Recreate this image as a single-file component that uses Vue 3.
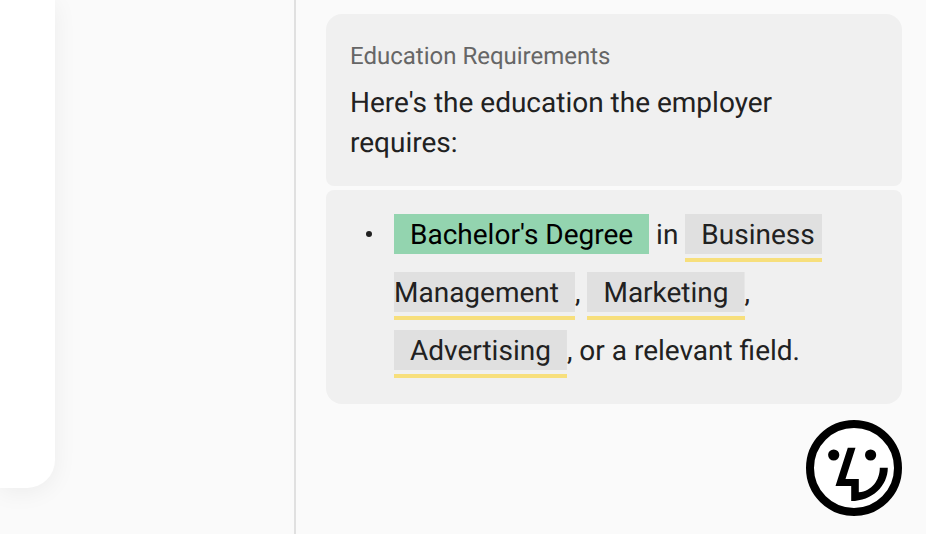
<script setup>
const intro = "Here's the education the employer requires:";
</script>

<template>
  <div class="page">
    <aside class="side">
      <div class="sheet"></div>
    </aside>
    <main class="content">
      <section class="card head">
        <h2 class="title">Education Requirements</h2>
        <p class="intro">{{ intro }}</p>
      </section>
      <section class="card body">
        <div class="row">
          <span class="dot"></span>
          <p class="text"><span class="hl green">Bachelor's Degree</span> in <span class="hl tag">Business Management</span>, <span class="hl tag">Marketing</span>, <span class="hl tag">Advertising</span>, or a relevant field.</p>
        </div>
      </section>
    </main>
    <svg class="logo" width="96" height="96" viewBox="0 0 96 96" aria-hidden="true">
      <circle cx="48" cy="48" r="44" fill="#fff" stroke="#000" stroke-width="8" />
      <circle cx="27.7" cy="35" r="5.6" fill="#000" />
      <circle cx="64.6" cy="35" r="5.6" fill="#000" />
      <path d="M41.8 27.7H49.5L39.5 59H52.8V72.3C66 71 73.8 60 73.8 47.7H81.8C81.8 66 66 81 45.2 81V66H29.5Z" fill="#000" />
    </svg>
  </div>
</template>

<style scoped>
.page {
  position: relative;
  display: flex;
  width: 926px;
  height: 534px;
  overflow: hidden;
  background: #fafafa;
  font-family: Roboto, "Liberation Sans", sans-serif;
  color: #212121;
  text-rendering: geometricPrecision;
}
.side {
  flex: 0 0 294px;
}
.sheet {
  width: 55px;
  height: 488px;
  background: #fff;
  border-bottom-right-radius: 28px;
  box-shadow: 0 4px 24px rgba(0, 0, 0, 0.06);
}
.content {
  flex: 1;
  display: flex;
  flex-direction: column;
  gap: 4px;
  box-sizing: border-box;
  padding: 14px 24px 0 30px;
  border-left: 2px solid #e0e0e0;
}
.card {
  background: #f0f0f0;
  padding: 0 24px;
}
.head {
  height: 172px;
  box-sizing: border-box;
  padding-top: 28px;
  border-radius: 16px 16px 8px 8px;
}
.title {
  margin: 0;
  font-size: 24px;
  font-weight: 400;
  line-height: 28px;
  color: #666;
}
.intro {
  margin: 13px 0 0;
  font-size: 28px;
  line-height: 40px;
}
.body {
  height: 214px;
  box-sizing: border-box;
  padding-top: 16px;
  border-radius: 8px 8px 16px 16px;
}
.row {
  display: flex;
  align-items: flex-start;
}
.dot {
  flex: none;
  width: 6px;
  height: 6px;
  margin: 25px 22px 0 16px;
  border-radius: 50%;
  background: #212121;
}
.text {
  flex: 1;
  margin: 0;
  font-size: 28px;
  line-height: 58px;
}
.hl {
  padding: 4px 16px 3px;
}
.green {
  background: #93d4af;
  color: #000;
}
.tag {
  padding-bottom: 7px;
  background: linear-gradient(#e0e0e0, #e0e0e0) top / 100% 40px no-repeat;
  border-bottom: 4px solid #f7df7c;
  white-space: pre-wrap;
}
.logo {
  position: absolute;
  left: 806px;
  top: 420px;
}
</style>
